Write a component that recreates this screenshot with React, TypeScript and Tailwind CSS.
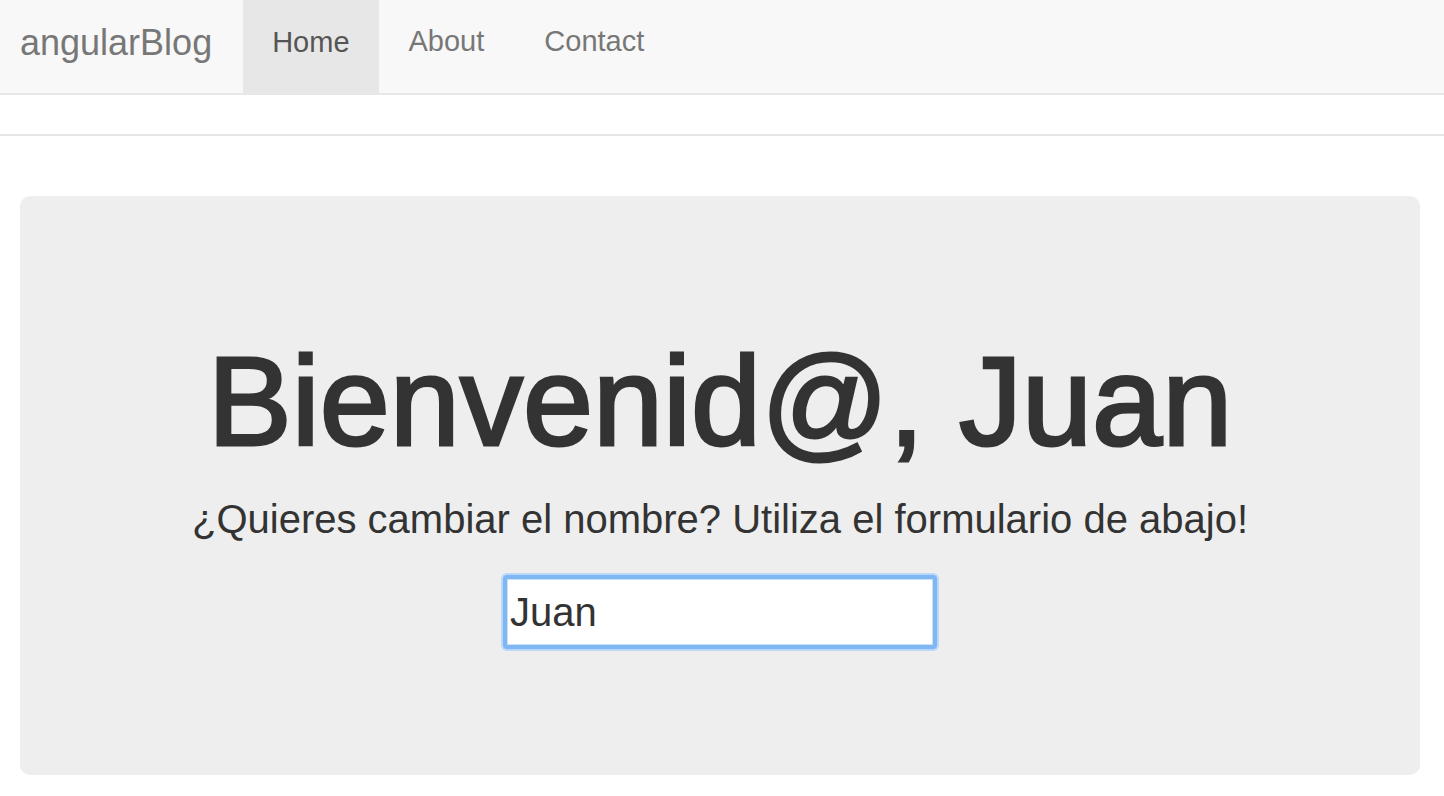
export default function App() {
  return (
    <div className="min-h-screen bg-white font-['Liberation_Sans',Arial,sans-serif]">
      {/* Navbar */}
      <nav className="flex h-[95px] items-stretch border-b-2 border-[#e7e7e7] bg-[#f8f8f8]">
        <a className="flex items-center pb-[8px] pl-5 pr-[31px] text-[36px] text-[#777]">angularBlog</a>
        <ul className="flex items-stretch">
          <li className="-mb-[2px] flex items-center bg-[#e7e7e7] px-[29px] pb-[10px] text-[29px] text-[#555]">Home</li>
          <li className="flex items-center px-[30px] pb-[10px] text-[29px] text-[#777]">About</li>
          <li className="flex items-center px-[30px] pb-[10px] text-[29px] text-[#777]">Contact</li>
        </ul>
      </nav>

      <div className="h-[41px] border-b-2 border-[#e5e5e5]" />

      <div className="pl-5 pr-6 pt-[60px]">
        <div className="flex h-[579px] flex-col items-center rounded-[10px] bg-[#eeeeee] pt-[136px] text-[#333]">
          <h1 className="text-[126px] leading-[140px] font-normal [-webkit-text-stroke:3px_#333]">
            Bienvenid@, Juan
          </h1>
          <p className="mt-[23px] text-[40px] leading-[48px] font-normal">
            ¿Quieres cambiar el nombre? Utiliza el formulario de abajo!
          </p>
          <input
            defaultValue="Juan"
            className="mt-[32px] h-[74px] w-[434px] rounded-[4px] border-[4px] border-[#7fb6f4] bg-white px-[3px] text-[40px] text-[#333] shadow-[0_0_0_2px_#bcd8f8,inset_0_0_0_1px_#c8e0fb] outline-none"
          />
        </div>
      </div>
    </div>
  );
}
